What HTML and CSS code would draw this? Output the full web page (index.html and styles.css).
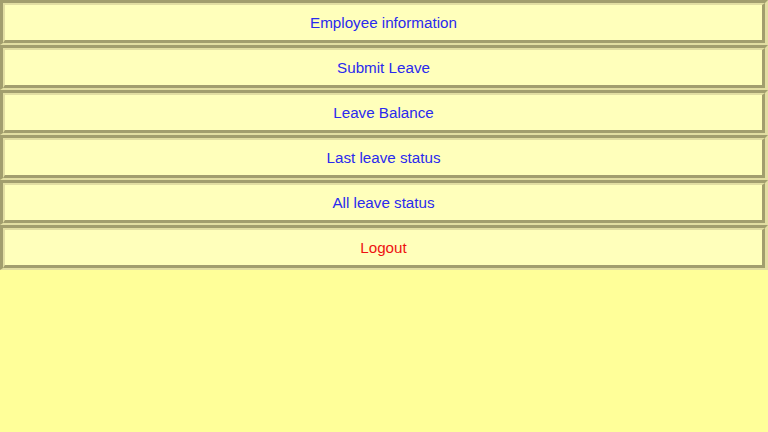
FILE: index.html
```html
<!DOCTYPE html>
<html>
<head>
<meta charset="utf-8">
<link rel="stylesheet" href="styles.css">
</head>
<body>
<nav class="menu">
  <div class="row"><a class="item" href="#">Employee information</a></div>
  <div class="row"><a class="item" href="#">Submit Leave</a></div>
  <div class="row"><a class="item" href="#">Leave Balance</a></div>
  <div class="row"><a class="item" href="#">Last leave status</a></div>
  <div class="row"><a class="item" href="#">All leave status</a></div>
  <div class="row"><a class="item logout" href="#">Logout</a></div>
</nav>
</body>
</html>
```
FILE: styles.css
```css
html, body {
  margin: 0;
  padding: 0;
  height: 100%;
  background: #ffff99;
  font-family: "Liberation Sans", Arial, sans-serif;
}
.menu {
  display: flex;
  flex-direction: column;
}
.row {
  height: 45px;
  box-sizing: border-box;
  border-style: solid;
  border-width: 3px 3px 2px 3px;
  border-color: #a29e6e #e2dea2 #e2dea2 #a29e6e;
  display: flex;
}
.item {
  flex: 1;
  display: flex;
  align-items: center;
  justify-content: center;
  box-sizing: border-box;
  border-style: solid;
  border-width: 2px 3px 3px 2px;
  border-color: #e2dea2 #a29e6e #a29e6e #e2dea2;
  background: #ffffbb;
  color: #2a2aee;
  font-size: 15.2px;
  text-decoration: none;
}
.logout {
  color: #ee1111;
}
```
